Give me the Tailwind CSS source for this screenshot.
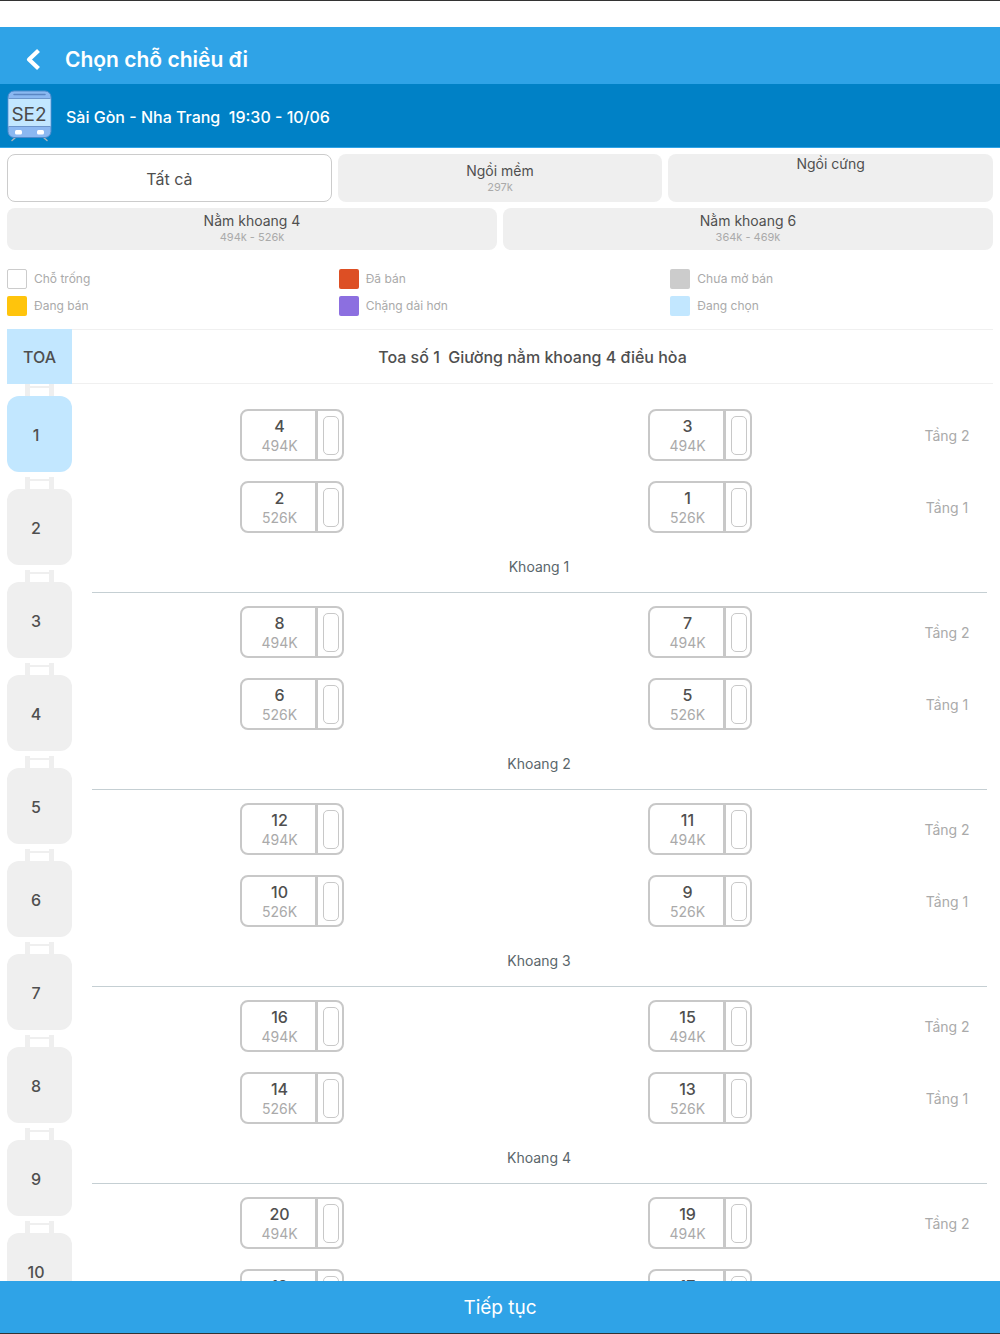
<!DOCTYPE html>
<html lang="vi">
<head>
  <meta charset="UTF-8" />
  <meta name="viewport" content="width=device-width, initial-scale=1.0" />
  <title>Chọn chỗ chiều đi</title>
  <script src="https://cdn.jsdelivr.net/npm/@tailwindcss/browser@4"></script>
</head>
<body class="h-screen flex flex-col overflow-hidden bg-white border-y border-[#333] font-['Inter','Noto_Sans',sans-serif] text-[#4f4f4f]">

  <!-- Header -->
  <header class="shrink-0 pt-[26px]">
    <div class="h-[57px] pt-2 flex items-center bg-[#2fa3e7] text-white">
      <button type="button" aria-label="Quay lại" class="w-[65px] h-full flex items-center justify-center">
        <svg class="w-4 h-6" viewBox="0 0 16 24" fill="none" stroke="currentColor" stroke-width="4.200" stroke-linejoin="round">
          <path d="M13.500 2.500 4 11.500l9.500 9" />
        </svg>
      </button>
      <h1 class="text-[21px] font-semibold">Chọn chỗ chiều đi</h1>
    </div>
    <div class="h-16 flex items-center bg-[#0081c6] border-b border-[#2fa3e7] text-white">
      <svg class="ml-[7px] w-[45px] h-[52px] shrink-0" viewBox="0 0 45 52">
        <path d="M9 47 5 50.500M36 47l4 3.500" stroke="#a9b4bd" stroke-width="1.500" fill="none" stroke-linecap="round" />
        <rect x="1" y="1" width="43" height="46.500" rx="6" fill="#8bb8f1" stroke="#4e8bcb" />
        <path d="M7 4.500h31" stroke="#5a86c4" stroke-width="1.500" stroke-linecap="round" />
        <path d="M1.500 8.500h42v28h-42z" fill="#c2e7ff" />
        <path d="M1.500 8.500h42M1.500 36.500h42" stroke="#6c96cc" />
        <rect x="8" y="40" width="7" height="4.500" rx="1.500" fill="#fff" />
        <rect x="30" y="40" width="7" height="4.500" rx="1.500" fill="#fff" />
        <text x="22" y="31" text-anchor="middle" font-size="19" fill="#4a4a4a">SE2</text>
      </svg>
      <p class="ml-[14px] pt-[3px] text-base font-medium whitespace-pre">Sài Gòn - Nha Trang  19:30 - 10/06</p>
    </div>
  </header>

  <!-- Seat type filter -->
  <nav class="shrink-0 px-[7px] pt-[6px] flex flex-col gap-[6px] text-sm leading-[18px]">
    <div class="grid grid-cols-3 gap-[6px] h-12">
      <button type="button" class="rounded-lg border border-[#ccc] bg-white pt-[2px] text-base">Tất cả</button>
      <button type="button" class="rounded-lg bg-[#efefef] flex flex-col items-center justify-center">
        <span>Ngồi mềm</span>
        <span class="text-[11px] leading-[15px] text-[#aaa]">297k</span>
      </button>
      <button type="button" class="rounded-lg bg-[#efefef] flex flex-col items-center pt-[1px]">
        <span>Ngồi cứng</span>
      </button>
    </div>
    <div class="grid grid-cols-2 gap-[6px] h-[42px]">
      <button type="button" class="rounded-lg bg-[#efefef] flex flex-col items-center justify-center pb-[2px]">
        <span>Nằm khoang 4</span>
        <span class="text-[11px] leading-[15px] text-[#aaa]">494k - 526k</span>
      </button>
      <button type="button" class="rounded-lg bg-[#efefef] flex flex-col items-center justify-center pb-[2px]">
        <span>Nằm khoang 6</span>
        <span class="text-[11px] leading-[15px] text-[#aaa]">364k - 469k</span>
      </button>
    </div>
  </nav>

  <!-- Legend -->
  <ul class="shrink-0 px-[7px] pt-[19px] pb-[13px] grid grid-cols-3 gap-x-[9px] gap-y-[7px] text-xs leading-5 text-[#aaa]">
    <li class="flex gap-[7px]"><span class="size-5 rounded-xs border border-[#ccc]"></span>Chỗ trống</li>
    <li class="flex gap-[7px]"><span class="size-5 rounded-xs bg-[#dd4f24]"></span>Đã bán</li>
    <li class="flex gap-[7px]"><span class="size-5 rounded-xs bg-[#ccc]"></span>Chưa mở bán</li>
    <li class="flex gap-[7px]"><span class="size-5 rounded-xs bg-[#ffc40c]"></span>Đang bán</li>
    <li class="flex gap-[7px]"><span class="size-5 rounded-xs bg-[#8c6fe0]"></span>Chặng dài hơn</li>
    <li class="flex gap-[7px]"><span class="size-5 rounded-xs bg-[#c2e7ff]"></span>Đang chọn</li>
  </ul>

  <div class="shrink-0 mx-[7px] h-[55px] flex items-stretch text-base font-medium">
    <div class="w-[65px] flex items-center justify-center bg-[#c2e7ff]">TOA</div>
    <h2 class="flex-1 flex items-center justify-center border-y border-[#f0f0f0] whitespace-pre">Toa số 1  Giường nằm khoang 4 điều hòa</h2>
  </div>

  <!-- Coaches and compartments -->
  <main class="flex-1 min-h-0 flex overflow-hidden">
    <div id="coaches" class="ml-[7px] w-[65px] shrink-0 flex flex-col gap-[5px]"></div>
    <div id="compartments" class="flex-1 ml-4 mr-[10px] pt-3"></div>
  </main>

  <button type="button" class="shrink-0 h-[52px] pt-[2px] bg-[#2fa3e7] text-white text-[19px]">Tiếp tục</button>

  <script>
    const coachCount = 10;
    const selectedCoach = 1;
    const compartmentCount = 5;

    const coaches = document.getElementById('coaches');
    for (let n = 1; n <= coachCount; n++) {
      const color = n === selectedCoach ? 'bg-[#c2e7ff]' : 'bg-[#efefef]';
      coaches.innerHTML += `
        <button type="button" class="shrink-0 flex flex-col items-center text-base font-medium">
          <span class="w-[29px] h-3 flex border-x-5 border-[#efefef]"><span class="mt-[2px] h-[2px] flex-1 bg-[#efefef]"></span></span>
          <span class="w-full h-[76px] pt-[2px] pr-[7px] rounded-xl flex items-center justify-center ${color}">${n}</span>
        </button>
      `;
    }

    const seat = (number, price) => `
      <button type="button" class="w-[104px] h-[52px] rounded-lg border-2 border-[#c8c8c8] flex items-center justify-self-center">
        <span class="flex-1 pt-[2px] pl-[2px] flex flex-col">
          <span class="text-base leading-5 font-medium">${number}</span>
          <span class="text-sm leading-5 text-[#aaa]">${price}</span>
        </span>
        <span class="w-[3px] h-full bg-[#c8c8c8]"></span>
        <span class="ml-[5px] mr-[3px] w-4 h-[39px] rounded-[5px] border border-[#c8c8c8]"></span>
      </button>
    `;

    const compartments = document.getElementById('compartments');
    for (let k = 1; k <= compartmentCount; k++) {
      const top = k * 4;
      compartments.innerHTML += `
        <section class="pt-[13px]">
          <div class="grid grid-cols-[1fr_1fr_86px] gap-y-5 items-center">
            ${seat(top, '494K')}
            ${seat(top - 1, '494K')}
            <span class="pt-[2px] text-center text-sm text-[#aaa]">Tầng 2</span>
            ${seat(top - 2, '526K')}
            ${seat(top - 3, '526K')}
            <span class="pt-[2px] text-center text-sm text-[#aaa]">Tầng 1</span>
          </div>
          <h3 class="h-[59px] pt-[23px] text-center text-sm leading-[22px] text-[#5a666b]">Khoang ${k}</h3>
          <hr class="ml-1 mr-[3px] border-[#c5cfd3]" />
        </section>
      `;
    }
  </script>
</body>
</html>
